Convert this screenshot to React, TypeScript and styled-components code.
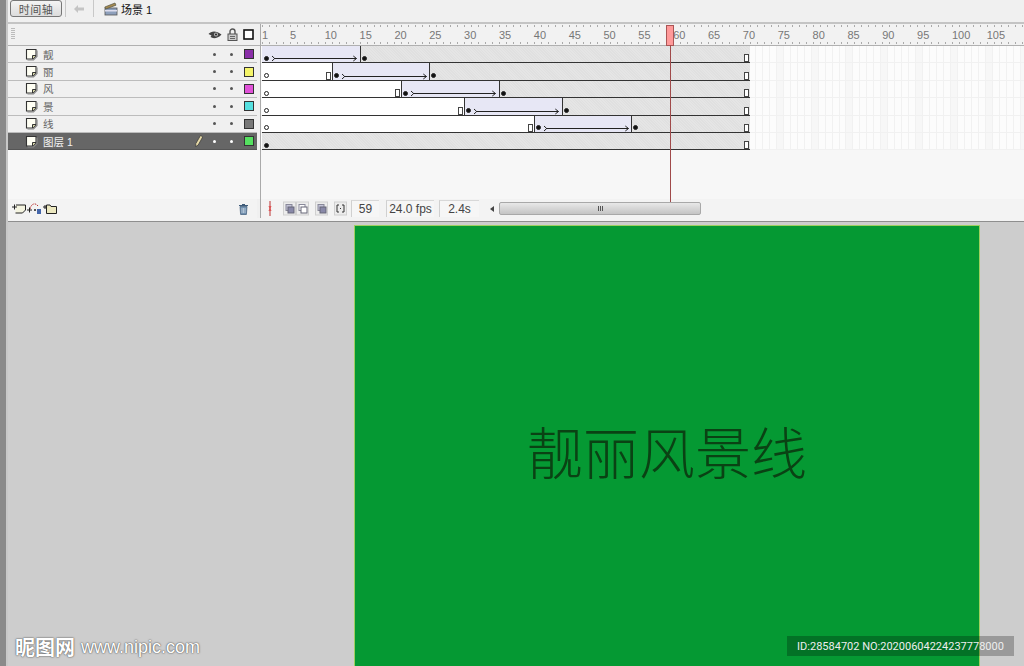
import React from "react";
import styled, { createGlobalStyle } from "styled-components";

const FRAME = 6.97;
const ROW = 17.4;

const GlobalStyle = createGlobalStyle`
  html, body {
    margin: 0;
    padding: 0;
    width: 1024px;
    height: 666px;
    overflow: hidden;
    background: #cdcdcd;
    font-family: "Liberation Sans", "Noto Sans CJK SC", sans-serif;
  }
`;

const Page = styled.div`
  position: relative;
  display: flex;
  width: 1024px;
  height: 666px;
  overflow: hidden;
`;

const Rail = styled.div`
  flex: 0 0 8px;
  background: linear-gradient(90deg, #8a8a8a 0 6px, #c8c8c8 6px);
`;

const Main = styled.div`
  flex: 1;
  display: flex;
  flex-direction: column;
  min-width: 0;
`;

const Panel = styled.div`
  flex: 0 0 222px;
  display: flex;
  flex-direction: column;
  background: #f3f3f3;
  border-bottom: 1px solid #8e8e8e;
  box-sizing: border-box;
`;

const Toolbar = styled.div`
  flex: 0 0 23px;
  box-sizing: border-box;
  display: flex;
  align-items: center;
  padding: 0 0 5px 2px;
  background: #f0f0f0;
  border-bottom: 2px solid #c4c4c4;
  font-size: 11px;
  color: #111;
`;

const TimelineButton = styled.button`
  width: 52px;
  height: 17px;
  padding: 0;
  font: inherit;
  letter-spacing: 0.5px;
  color: #555;
  background: linear-gradient(#f4f4f4, #dcdcdc);
  border: 1px solid #777;
  border-radius: 3px;
`;

const ToolSep = styled.span<{ $l: number; $r: number }>`
  width: 1px;
  height: 17px;
  background: #c8c8c8;
  margin: 0 ${(p) => p.$r}px 0 ${(p) => p.$l}px;
`;

const Scene = styled.span`
  display: flex;
  align-items: center;
  gap: 3px;
`;

const Timeline = styled.div`
  flex: 1;
  display: flex;
  min-height: 0;
  padding-bottom: 3px;
`;

const LayerColumn = styled.div`
  flex: 0 0 252px;
  display: flex;
  flex-direction: column;
  border-right: 1px solid #aaa;
  box-shadow: inset -3px 0 0 #f0f0f0;
`;

const LayerHead = styled.div`
  flex: 0 0 22px;
  box-sizing: border-box;
  display: flex;
  align-items: center;
  justify-content: flex-end;
  gap: 5px;
  padding-right: 6px;
  background: #f0f0f0;
  border-bottom: 1px solid #b0b0b0;
  position: relative;
`;

const Grip = styled.span`
  position: absolute;
  left: 3px;
  top: 4px;
  width: 4px;
  height: 12px;
  background: repeating-linear-gradient(#bbb 0 1px, transparent 1px 2px);
`;

const LayerRow = styled.div<{ $active?: boolean }>`
  flex: 0 0 ${ROW}px;
  box-sizing: border-box;
  margin-right: 3px;
  display: flex;
  align-items: center;
  padding-left: 17px;
  font-size: 10.5px;
  background: ${(p) => (p.$active ? "#666666" : "#f0f0f0")};
  color: ${(p) => (p.$active ? "#f2f2f2" : "#666")};
  border-bottom: 1px solid ${(p) => (p.$active ? "#555" : "#bcbcbc")};
`;

const LayerName = styled.span`
  flex: 1;
  margin-left: 5px;
`;

const PencilSlot = styled.span`
  flex: 0 0 14px;
  display: flex;
  justify-content: center;
`;

const DotSlot = styled.span<{ $active?: boolean }>`
  flex: 0 0 17px;
  display: flex;
  justify-content: center;
  &::before {
    content: "";
    width: 3px;
    height: 3px;
    border-radius: 50%;
    background: ${(p) => (p.$active ? "#fff" : "#555")};
  }
`;

const Swatch = styled.span<{ $color: string }>`
  flex: 0 0 10px;
  height: 10px;
  box-sizing: border-box;
  margin: 0 3px 0 4px;
  background: ${(p) => p.$color};
  border: 1px solid #333;
`;

const LayerSpace = styled.div`
  flex: 1;
  background: #f7f7f7;
`;

const LayerFooter = styled.div`
  flex: 0 0 19px;
  margin-right: 3px;
  display: flex;
  align-items: center;
  padding: 0 8px 0 4px;
  gap: 1px;
  background: #f3f3f3;
  & > svg:last-child {
    margin-left: auto;
  }
`;

const FramesColumn = styled.div`
  flex: 1;
  min-width: 0;
  position: relative;
  display: flex;
  flex-direction: column;
  overflow: hidden;
`;

const Ruler = styled.div`
  flex: 0 0 22px;
  box-sizing: border-box;
  display: grid;
  grid-template-columns: repeat(112, ${FRAME}px);
  align-items: center;
  padding-left: 1px;
  border-bottom: 1px solid #b0b0b0;
  font-size: 11px;
  color: #777;
  background:
    repeating-linear-gradient(90deg, #aaa 0 1px, transparent 1px ${FRAME}px) 1px 1px / 100% 2px no-repeat,
    repeating-linear-gradient(90deg, #aaa 0 1px, transparent 1px ${FRAME}px) 1px 18px / 100% 2px no-repeat,
    #f2f2f2;
`;

const RulerLabel = styled.span<{ $frame: number }>`
  grid-column: ${(p) => p.$frame};
  grid-row: 1;
  display: flex;
  justify-content: flex-start;
  white-space: nowrap;
`;

const Grid = styled.div`
  flex: 0 0 ${ROW * 6}px;
  padding-left: 1px;
  background:
    repeating-linear-gradient(transparent 0 16.4px, #f1f1f1 16.4px ${ROW}px),
    repeating-linear-gradient(90deg, transparent 0 ${FRAME - 1}px, #f1f1f1 ${FRAME - 1}px ${FRAME}px),
    repeating-linear-gradient(90deg, transparent 0 ${FRAME * 4}px, #f7f7f7 ${FRAME * 4}px ${FRAME * 5}px),
    #fcfcfc;
`;

const Track = styled.div`
  display: flex;
  width: ${FRAME * 70}px;
  height: ${ROW}px;
  box-sizing: border-box;
  border-bottom: 1px solid #333;
  border-right: 1px solid #333;
`;

const Segment = styled.div<{ $frames: number; $kind: "blank" | "tween" | "hold"; $divided?: boolean }>`
  flex: 0 0 ${(p) => p.$frames * FRAME}px;
  box-sizing: border-box;
  display: flex;
  align-items: flex-end;
  justify-content: ${(p) => (p.$kind === "tween" ? "flex-start" : "space-between")};
  padding: 0 1px 0 ${(p) => (p.$divided ? 0 : 1)}px;
  background: ${(p) =>
    p.$kind === "blank"
      ? "#ffffff"
      : p.$kind === "tween"
        ? "#e7e7f5"
        : "repeating-linear-gradient(45deg, #e5e5e5 0 1px, #e0e0e0 1px 2px)"};
  border-left: ${(p) => (p.$divided ? "1px solid #333" : "0")};
`;

const KeyDot = styled.span<{ $hollow?: boolean }>`
  flex: 0 0 auto;
  width: 5px;
  height: 5px;
  box-sizing: border-box;
  margin: 0 0 1.5px 1px;
  border-radius: 50%;
  background: ${(p) => (p.$hollow ? "#fff" : "#111")};
  border: 1px solid #222;
`;

const EndBox = styled.span`
  flex: 0 0 auto;
  width: 5px;
  height: 8px;
  box-sizing: border-box;
  background: #fff;
  border: 1px solid #444;
`;

const Arrow = styled.svg`
  flex: 1;
  min-width: 0;
  height: 7px;
  margin: 0 1px 0 3px;
`;

const BelowGrid = styled.div`
  flex: 1;
  background: #f7f7f7;
`;

const StatusBar = styled.div`
  flex: 0 0 19px;
  display: flex;
  align-items: center;
  font-size: 12px;
  color: #444;
  background: #f3f3f3;
  padding-left: 4px;
`;

const StatusIcon = styled.span<{ $gap?: number }>`
  display: flex;
  margin-left: ${(p) => p.$gap ?? 0}px;
`;

const Field = styled.span<{ $w: number; $gap?: number }>`
  flex: 0 0 ${(p) => p.$w}px;
  height: 17px;
  box-sizing: border-box;
  display: flex;
  align-items: center;
  justify-content: center;
  margin-left: ${(p) => p.$gap ?? 5}px;
  border-left: 1px solid #d0d0d0;
  border-top: 1px solid #d8d8d8;
  background: #f6f6f6;
`;

const ScrollArrow = styled.span`
  margin-left: 11px;
  width: 0;
  height: 0;
  border: 3px solid transparent;
  border-left: 0;
  border-right: 4px solid #444;
`;

const ScrollThumb = styled.span`
  flex: 0 0 202px;
  height: 13px;
  box-sizing: border-box;
  margin-left: 5px;
  display: flex;
  align-items: center;
  justify-content: center;
  border: 1px solid #a8a8a8;
  border-radius: 2px;
  background: linear-gradient(#e8e8e8, #c4c4c4);
`;

const Grooves = styled.span`
  width: 5px;
  height: 5px;
  background: repeating-linear-gradient(90deg, #555 0 1px, transparent 1px 2px);
`;

const Playhead = styled.div`
  position: absolute;
  left: 405px;
  top: 1px;
  width: 8px;
  height: 21px;
  box-sizing: border-box;
  background: #f99;
  border: 1px solid #a55;
  &::after {
    content: "";
    position: absolute;
    left: 2.5px;
    top: 19px;
    width: 1px;
    height: 157px;
    background: #a04a4a;
  }
`;

const StageArea = styled.div`
  flex: 1;
  min-height: 0;
  padding: 3px 44px 0 347px;
  background: #cdcdcd;
`;

const Stage = styled.div`
  height: 100%;
  box-sizing: border-box;
  padding: 8px 0 0 0;
  margin-left: -1px;
  display: flex;
  align-items: center;
  justify-content: center;
  background: #059933;
  border: 1px solid #9fd060;
  border-width: 1px 1px 0 1px;
`;

const Title = styled.h1`
  margin: 0;
  font-family: "Noto Sans CJK SC", sans-serif;
  font-size: 56px;
  font-weight: 300;
  line-height: 1;
  color: #0a4214;
`;

const NipicMark = styled.div`
  position: absolute;
  left: 15px;
  bottom: 8px;
  display: flex;
  align-items: center;
  gap: 6px;
  color: #fff;
  text-shadow: 0 0 2px #555, 0 0 1px #555;
`;

const NipicName = styled.span`
  font-family: "Noto Sans CJK SC", sans-serif;
  font-size: 20px;
  font-weight: 700;
  line-height: 22px;
`;

const NipicUrl = styled.span`
  font-size: 18px;
  line-height: 22px;
`;

const IdMark = styled.div`
  position: absolute;
  left: 787px;
  top: 636px;
  width: 227px;
  height: 20px;
  display: flex;
  align-items: center;
  justify-content: center;
  font-family: Roboto, sans-serif;
  font-size: 11px;
  color: #eee;
  background: rgba(0, 0, 0, 0.25);
  white-space: nowrap;
`;

const NoteIcon = () => (
  <svg width="13" height="13" viewBox="0 0 13 13">
    <path d="M1.5 1.5h9.5v6.5l-3 3H1.5z" fill="#fffff4" stroke="#333" strokeWidth="1.1" />
    <path d="M7.5 11V7.5H11" fill="#d8d8a8" stroke="#333" strokeWidth="1" />
    <path d="M12 2.5v6l-3.5 3.5H2.5" fill="none" stroke="#888" strokeWidth="1.2" />
  </svg>
);

const Pencil = () => (
  <svg width="8" height="12" viewBox="0 0 8 12">
    <path d="M5.5 0.5 7.8 1.8 3.2 10 0.6 11.6 0.8 8.6z" fill="#e6d9a8" stroke="#333" strokeWidth="0.7" />
  </svg>
);

const EyeIcon = () => (
  <svg width="14" height="10" viewBox="0 0 14 10">
    <path d="M0.5 4C3 1 8 0 13.5 4.5 10 8.5 5 9 2.5 7L3.5 5.5z" fill="#444" />
    <circle cx="8" cy="4.5" r="2" fill="#bbb" />
    <circle cx="8" cy="4.5" r="1" fill="#222" />
  </svg>
);

const LockIcon = () => (
  <svg width="11" height="13" viewBox="0 0 11 13">
    <path d="M3 6V3.5a2.5 2.5 0 0 1 5 0V6" fill="none" stroke="#555" strokeWidth="1.4" />
    <rect x="1" y="6" width="9" height="6.5" fill="#ccc" stroke="#555" />
    <path d="M3 8.5h5M3 10.5h5" stroke="#666" />
  </svg>
);

const OutlineIcon = () => (
  <svg width="11" height="11" viewBox="0 0 11 11">
    <rect x="1" y="1" width="9" height="9" fill="#fff" stroke="#111" strokeWidth="1.6" />
  </svg>
);

const Clapper = () => (
  <svg width="14" height="14" viewBox="0 0 14 14">
    <rect x="1" y="6" width="12" height="7" fill="#8ea0bc" stroke="#555" strokeWidth="0.8" />
    <rect x="1" y="8" width="12" height="1.5" fill="#dde" />
    <path d="M0.8 5 11 1l1 2.2L1.8 7z" fill="#a58a50" stroke="#554" strokeWidth="0.7" />
  </svg>
);

const BackArrow = () => (
  <svg width="12" height="10" viewBox="0 0 12 10">
    <path d="M5 1 1 5l4 4V6.5h6v-3H5z" fill="#c4c4c4" />
  </svg>
);

const NewLayerIcon = () => (
  <svg width="14" height="13" viewBox="0 0 14 13">
    <path d="M4 3h9.5v5l-3 3H3.5" fill="#f4f4e0" stroke="#222" />
    <path d="M0 5h5M2.5 2.5v5" stroke="#222" strokeWidth="1" />
  </svg>
);

const GuideIcon = () => (
  <svg width="15" height="13" viewBox="0 0 15 13">
    <path d="M3 7C4 2 8 0 11 4" fill="none" stroke="#b33" strokeDasharray="1.5 1" />
    <path d="M0 8h5M2.5 5.5v5" stroke="#222" />
    <rect x="10" y="7" width="4" height="5" fill="#46a" />
    <circle cx="8" cy="8" r="1" fill="#222" />
  </svg>
);

const FolderIcon = () => (
  <svg width="14" height="13" viewBox="0 0 14 13">
    <path d="M3.5 11.5V3H7l1 1.5h5.5v7z" fill="#ece8c0" stroke="#222" />
    <path d="M0 5h4M2 3v4" stroke="#222" />
  </svg>
);

const TrashIcon = () => (
  <svg width="11" height="12" viewBox="0 0 11 12">
    <path d="M1 2.5h9M4 1.5h3" stroke="#3d5a78" strokeWidth="1.2" />
    <path d="M2 3.5h7l-.6 8H2.6z" fill="#6f8fae" stroke="#3d5a78" strokeWidth="0.7" />
    <path d="M4 5v5M5.5 5v5M7 5v5" stroke="#dfe8f0" strokeWidth="0.6" />
  </svg>
);

const CenterFrameIcon = () => (
  <svg width="10" height="15" viewBox="0 0 10 15">
    <path d="M5 0v15" stroke="#b33" />
    <path d="M3.5 5h3l-1 2.5 1 2.5h-3l1-2.5z" fill="#d55" />
  </svg>
);

const OnionIcon = ({ variant }: { variant: "solid" | "outline" | "edit" }) => (
  <svg width="13" height="15" viewBox="0 0 13 15">
    <rect x="0.5" y="1" width="12" height="13" fill="#ececec" stroke="#d0d0d0" />
    <rect x="3" y="3.5" width="6" height="6" fill={variant === "outline" ? "#fff" : "#c4c4d8"} stroke="#889" />
    <rect x="5" y="6" width="6" height="6" fill={variant === "outline" ? "#fff" : "#8888a8"} stroke="#667" />
  </svg>
);

const MarkersIcon = () => (
  <svg width="13" height="15" viewBox="0 0 13 15">
    <rect x="0.5" y="1" width="12" height="13" fill="#ececec" stroke="#d0d0d0" />
    <path d="M5 4H3v7h2M8 4h2v7H8" fill="none" stroke="#333" />
    <rect x="6" y="7" width="1" height="1" fill="#333" />
  </svg>
);

const TweenArrow = () => (
  <Arrow viewBox="0 0 80 7" preserveAspectRatio="none">
    <path d="M0 1l2.5 2.5L0 6" fill="none" stroke="#222" vectorEffect="non-scaling-stroke" />
    <path d="M2 3.5h77M76 1l3 2.5-3 2.5" fill="none" stroke="#222" vectorEffect="non-scaling-stroke" />
  </Arrow>
);

type Layer = { name: string; color: string; blank: number; tween: number };

const layers: Layer[] = [
  { name: "靓", color: "#8a2fa8", blank: 0, tween: 14 },
  { name: "丽", color: "#f5f56a", blank: 10, tween: 14 },
  { name: "风", color: "#e052d8", blank: 20, tween: 14 },
  { name: "景", color: "#55e0e0", blank: 29, tween: 14 },
  { name: "线", color: "#777777", blank: 39, tween: 14 },
  { name: "图层 1", color: "#55e060", blank: 0, tween: 0 },
];

const TOTAL = 70;
const rulerMarks = [1, 5, 10, 15, 20, 25, 30, 35, 40, 45, 50, 55, 60, 65, 70, 75, 80, 85, 90, 95, 100, 105];

const FrameTrack = ({ layer }: { layer: Layer }) => {
  const hold = TOTAL - layer.blank - layer.tween;
  return (
    <Track>
      {layer.blank > 0 && (
        <Segment $frames={layer.blank} $kind="blank">
          <KeyDot $hollow />
          <EndBox />
        </Segment>
      )}
      {layer.tween > 0 && (
        <Segment $frames={layer.tween} $kind="tween" $divided={layer.blank > 0}>
          <KeyDot />
          <TweenArrow />
        </Segment>
      )}
      <Segment $frames={hold} $kind="hold" $divided={layer.tween > 0}>
        <KeyDot />
        <EndBox />
      </Segment>
    </Track>
  );
};

export default function App() {
  return (
    <Page>
      <GlobalStyle />
      <Rail />
      <Main>
        <Panel>
          <Toolbar>
            <TimelineButton>时间轴</TimelineButton>
            <ToolSep $l={3} $r={7} />
            <BackArrow />
            <ToolSep $l={8} $r={10} />
            <Scene>
              <Clapper />
              场景 1
            </Scene>
          </Toolbar>
          <Timeline>
            <LayerColumn>
              <LayerHead>
                <Grip />
                <EyeIcon />
                <LockIcon />
                <OutlineIcon />
              </LayerHead>
              {layers.map((layer, i) => {
                const active = i === layers.length - 1;
                return (
                  <LayerRow key={layer.name} $active={active}>
                    <NoteIcon />
                    <LayerName>{layer.name}</LayerName>
                    <PencilSlot>{active && <Pencil />}</PencilSlot>
                    <DotSlot $active={active} />
                    <DotSlot $active={active} />
                    <Swatch $color={layer.color} />
                  </LayerRow>
                );
              })}
              <LayerSpace />
              <LayerFooter>
                <NewLayerIcon />
                <GuideIcon />
                <FolderIcon />
                <TrashIcon />
              </LayerFooter>
            </LayerColumn>
            <FramesColumn>
              <Ruler>
                {rulerMarks.map((n) => (
                  <RulerLabel key={n} $frame={n}>
                    {n}
                  </RulerLabel>
                ))}
              </Ruler>
              <Grid>
                {layers.map((layer) => (
                  <FrameTrack key={layer.name} layer={layer} />
                ))}
              </Grid>
              <BelowGrid />
              <StatusBar>
                <CenterFrameIcon />
                <StatusIcon $gap={8}>
                  <OnionIcon variant="solid" />
                  <OnionIcon variant="outline" />
                </StatusIcon>
                <StatusIcon $gap={6}>
                  <OnionIcon variant="edit" />
                </StatusIcon>
                <StatusIcon $gap={6}>
                  <MarkersIcon />
                </StatusIcon>
                <Field $w={28} $gap={4}>59</Field>
                <Field $w={48} $gap={7}>24.0 fps</Field>
                <Field $w={40}>2.4s</Field>
                <ScrollArrow />
                <ScrollThumb>
                  <Grooves />
                </ScrollThumb>
              </StatusBar>
              <Playhead />
            </FramesColumn>
          </Timeline>
        </Panel>
        <StageArea>
          <Stage>
            <Title>靓丽风景线</Title>
          </Stage>
        </StageArea>
      </Main>
      <NipicMark>
        <NipicName>昵图网</NipicName>
        <NipicUrl>www.nipic.com</NipicUrl>
      </NipicMark>
      <IdMark>ID:28584702 NO:20200604224237778000</IdMark>
    </Page>
  );
}
